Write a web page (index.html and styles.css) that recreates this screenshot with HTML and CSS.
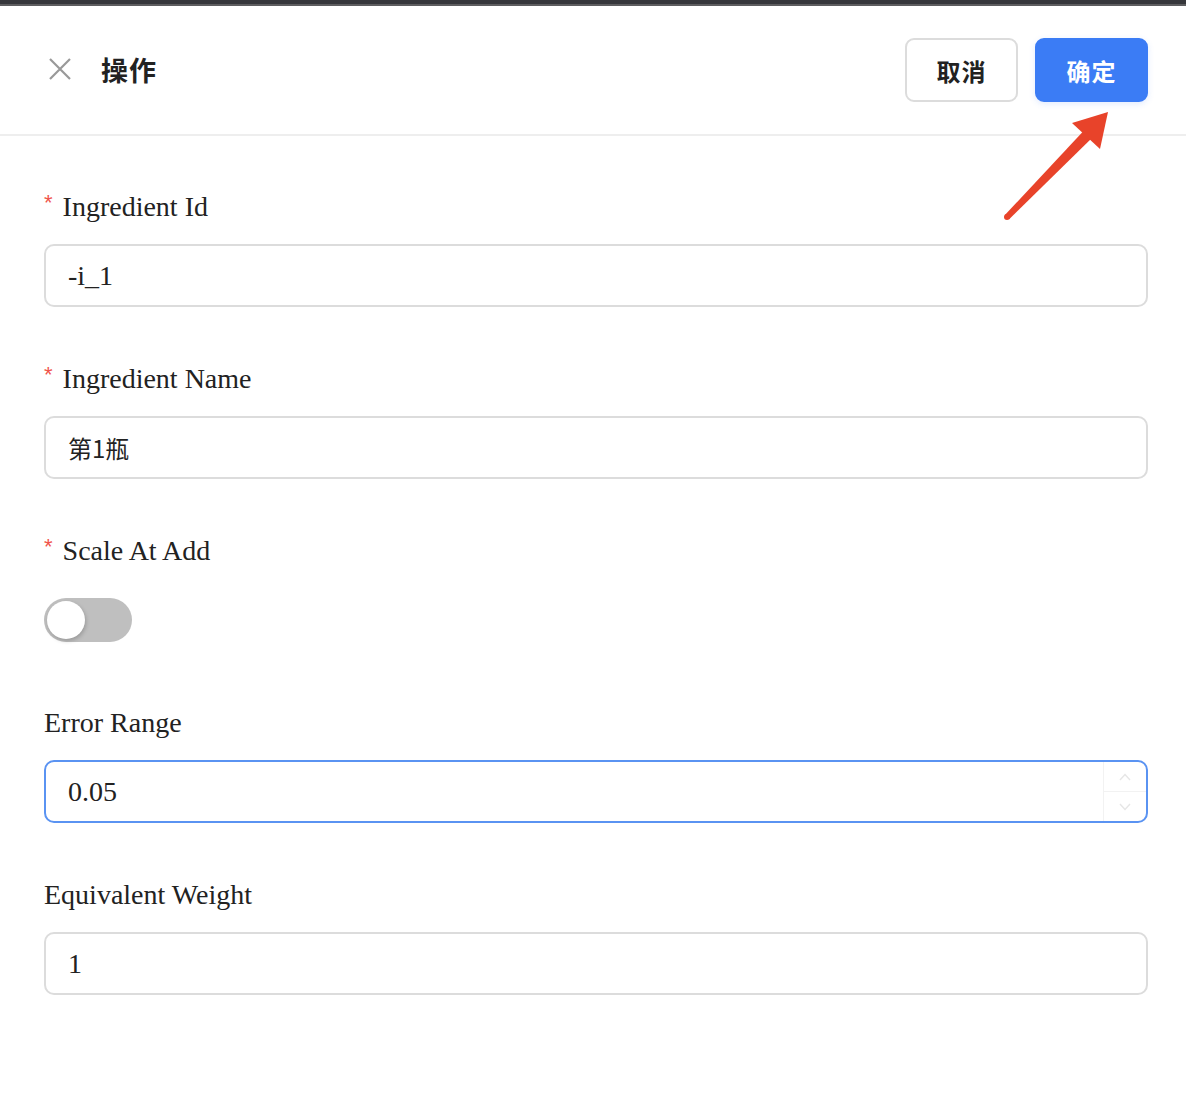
FILE: index.html
```html
<!DOCTYPE html>
<html lang="zh">
<head>
  <meta charset="UTF-8">
  <meta name="viewport" content="width=device-width, initial-scale=1.0">
  <title>操作</title>
  <link rel="stylesheet" href="styles.css">
</head>
<body>
  <div class="topbar"></div>

  <div class="header">
    <div class="header-left">
      <button class="close-btn" type="button" aria-label="close">
        <svg width="22" height="22" viewBox="0 0 22 22">
          <path d="M1 1 L21 21 M21 1 L1 21" stroke="#999" stroke-width="2.2" fill="none"/>
        </svg>
      </button>
      <h2>操作</h2>
    </div>
    <div class="header-actions">
      <button class="btn btn-default" type="button">取消</button>
      <button class="btn btn-primary" type="button">确定</button>
    </div>
  </div>

  <!-- pointer drawn over the header -->
  <svg class="pointer" width="115" height="120" viewBox="1000 105 115 120">
    <path d="M1004.9 215 L1086.5 127.8 L1094.5 135.6 L1009.2 219.2 Z" fill="#e8432a"/>
    <circle cx="1007" cy="217" r="3" fill="#e8432a"/>
    <path d="M1108 112 L1072 123 L1100 149 Z" fill="#e8432a"/>
  </svg>

  <form class="form">
    <div class="form-item">
      <label class="required">Ingredient Id</label>
      <input type="text" value="-i_1">
    </div>

    <div class="form-item">
      <label class="required">Ingredient Name</label>
      <input type="text" class="cjk" value="第1瓶">
    </div>

    <div class="form-item">
      <label class="required">Scale At Add</label>
      <div class="switch-row">
        <span class="switch"><span class="knob"></span></span>
      </div>
    </div>

    <div class="form-item">
      <label>Error Range</label>
      <div class="number-input">
        <input type="text" value="0.05">
        <div class="spinner">
          <span class="up">
            <svg width="12" height="8" viewBox="0 0 12 8"><path d="M1 7 L6 1.5 L11 7" stroke="#e6e6e6" stroke-width="1.4" fill="none"/></svg>
          </span>
          <span class="down">
            <svg width="12" height="8" viewBox="0 0 12 8"><path d="M1 1 L6 6.5 L11 1" stroke="#e6e6e6" stroke-width="1.4" fill="none"/></svg>
          </span>
        </div>
      </div>
    </div>

    <div class="form-item">
      <label>Equivalent Weight</label>
      <input type="text" value="1">
    </div>
  </form>
</body>
</html>
```

FILE: styles.css
```css
* {
  box-sizing: border-box;
  margin: 0;
  padding: 0;
}

body {
  background: #ffffff;
  font-family: "Liberation Serif", "Noto Sans CJK SC", serif;
  color: #222;
  width: 1186px;
  height: 1094px;
  overflow: hidden;
  position: relative;
}

.topbar {
  height: 6px;
  background: #36373b;
  border-bottom: 2px solid #5d5d5f;
}

.header {
  height: 130px;
  border-bottom: 2px solid #eeeeee;
  display: flex;
  align-items: center;
  justify-content: space-between;
  padding: 0 38px 0 44px;
}

.header-left {
  display: flex;
  align-items: center;
  gap: 25px;
  margin-top: -2px;
}

.close-btn {
  width: 32px;
  height: 32px;
  border: none;
  background: none;
  display: flex;
  align-items: center;
  justify-content: center;
  cursor: pointer;
}

.header h2 {
  font-family: "Noto Sans CJK SC", sans-serif;
  font-size: 27px;
  font-weight: 700;
  color: #222;
  letter-spacing: 1px;
}

.header-actions {
  display: flex;
  gap: 17px;
}

.btn {
  width: 113px;
  height: 64px;
  border-radius: 9px;
  font-family: "Noto Sans CJK SC", sans-serif;
  font-size: 24px;
  font-weight: 700;
  letter-spacing: 1px;
  cursor: pointer;
}

.btn-default {
  background: #fff;
  border: 2px solid #dcdcdc;
  color: #222;
}

.btn-primary {
  background: #3b7cf5;
  border: 2px solid #3b7cf5;
  color: #fff;
  box-shadow: 0 2px 6px rgba(59, 124, 245, 0.15);
}

.pointer {
  position: absolute;
  left: 1000px;
  top: 105px;
}

.form {
  padding: 53px 38px 0 44px;
}

.form-item {
  margin-bottom: 54px;
}

.form-item label {
  display: block;
  font-size: 28px;
  line-height: 36px;
  height: 36px;
  margin-bottom: 19px;
  color: #222;
}

.form-item label.required::before {
  content: "*";
  color: #f0544c;
  font-family: "Liberation Sans", sans-serif;
  font-size: 22px;
  line-height: 0;
  vertical-align: 6px;
  margin-right: 10px;
}

.form-item input {
  display: block;
  width: 100%;
  height: 63px;
  padding: 0 22px;
  border: 2px solid #dcdcdc;
  border-radius: 10px;
  font-family: "Liberation Serif", "Noto Sans CJK SC", serif;
  font-size: 28px;
  color: #222;
  outline: none;
}

.form-item input.cjk {
  font-family: "Noto Sans CJK SC", sans-serif;
  font-size: 24px;
  font-weight: 400;
}

.switch-row {
  height: 63px;
  display: flex;
  align-items: center;
}

.switch {
  width: 88px;
  height: 44px;
  border-radius: 22px;
  background: #bfbfbf;
  position: relative;
}

.switch .knob {
  position: absolute;
  left: 3px;
  top: 3px;
  width: 38px;
  height: 38px;
  border-radius: 50%;
  background: #fff;
  box-shadow: 1px 2px 4px rgba(0, 0, 0, 0.2);
}

.number-input {
  position: relative;
}

.number-input input {
  border-color: #5a93f2;
}

.spinner {
  position: absolute;
  right: 2px;
  top: 2px;
  bottom: 2px;
  width: 43px;
  border-left: 1px solid #f2f2f2;
  display: flex;
  flex-direction: column;
}

.spinner span {
  flex: 1;
  display: flex;
  align-items: center;
  justify-content: center;
}

.spinner .up {
  border-bottom: 1px solid #f2f2f2;
}
```
